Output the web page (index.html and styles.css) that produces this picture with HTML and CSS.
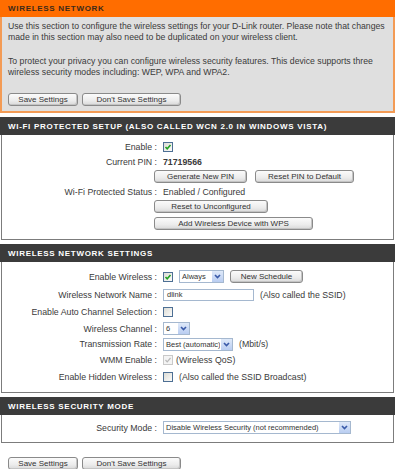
FILE: index.html
```html
<!DOCTYPE html>
<html>
<head>
	<title>Wireless Network</title>
	<link rel="stylesheet" href="styles.css">
</head>
<body>
	<div class="box intro">
		<h2>WIRELESS NETWORK</h2>
		<div class="inner">
			<p>Use this section to configure the wireless settings for your D-Link router. Please note that changes made in this section may also need to be duplicated on your wireless client.</p>
			<p>To protect your privacy you can configure wireless security features. This device supports three wireless security modes including: WEP, WPA and WPA2.</p>
			<div class="btnrow">
				<span class="btn w70">Save Settings</span><span class="btn w99">Don't Save Settings</span>
			</div>
		</div>
	</div>

	<div class="box">
		<h2>WI-FI PROTECTED SETUP (ALSO CALLED WCN 2.0 IN WINDOWS VISTA)</h2>
		<div class="inner wps">
			<div class="duple"><label>Enable :</label><span class="value"><span class="chk on"><svg width="8" height="8" viewBox="0 0 8 8"><polyline points="1.5,4 3.2,5.8 6.5,2" fill="none" stroke="#21a121" stroke-width="1.6"/></svg></span></span></div>
			<div class="duple"><label>Current PIN :</label><span class="value"><b>71719566</b></span></div>
			<div class="duple"><label></label><span class="value btns"><span class="btn w94">Generate New PIN</span><span class="btn w99">Reset PIN to Default</span></span></div>
			<div class="duple"><label>Wi-Fi Protected Status :</label><span class="value">Enabled / Configured</span></div>
			<div class="duple"><label></label><span class="value btns"><span class="btn w114">Reset to Unconfigured</span></span></div>
			<div class="duple last"><label></label><span class="value btns"><span class="btn w159">Add Wireless Device with WPS</span></span></div>
		</div>
	</div>

	<div class="box">
		<h2>WIRELESS NETWORK SETTINGS</h2>
		<div class="inner net">
			<div class="duple r19"><label>Enable Wireless :</label><span class="value">
				<span class="chk on"><svg width="8" height="8" viewBox="0 0 8 8"><polyline points="1.5,4 3.2,5.8 6.5,2" fill="none" stroke="#21a121" stroke-width="1.6"/></svg></span>
				<span class="sel w45"><span class="txt">Always</span><span class="arr"><svg width="7" height="5" viewBox="0 0 7 5"><polyline points="1,1 3.5,3.6 6,1" fill="none" stroke="#3a5aa8" stroke-width="1.6"/></svg></span></span>
				<span class="btn w73">New Schedule</span>
			</span></div>
			<div class="duple"><label>Wireless Network Name :</label><span class="value"><span class="txtbox">dlink</span><span class="note">(Also called the SSID)</span></span></div>
			<div class="duple"><label>Enable Auto Channel Selection :</label><span class="value"><span class="chk"></span></span></div>
			<div class="duple"><label>Wireless Channel :</label><span class="value">
				<span class="sel w27"><span class="txt">6</span><span class="arr"><svg width="7" height="5" viewBox="0 0 7 5"><polyline points="1,1 3.5,3.6 6,1" fill="none" stroke="#3a5aa8" stroke-width="1.6"/></svg></span></span>
			</span></div>
			<div class="duple r14"><label>Transmission Rate :</label><span class="value">
				<span class="sel w70"><span class="txt">Best (automatic)</span><span class="arr"><svg width="7" height="5" viewBox="0 0 7 5"><polyline points="1,1 3.5,3.6 6,1" fill="none" stroke="#3a5aa8" stroke-width="1.6"/></svg></span></span><span class="note">(Mbit/s)</span>
			</span></div>
			<div class="duple"><label>WMM Enable :</label><span class="value"><span class="chk off"><svg width="8" height="8" viewBox="0 0 8 8"><polyline points="1.5,4 3.2,5.8 6.5,2" fill="none" stroke="#b8b8b8" stroke-width="1.2"/></svg></span><span class="note tight">(Wireless QoS)</span></span></div>
			<div class="duple"><label>Enable Hidden Wireless :</label><span class="value"><span class="chk"></span><span class="note">(Also called the SSID Broadcast)</span></span></div>
		</div>
	</div>

	<div class="box">
		<h2>WIRELESS SECURITY MODE</h2>
		<div class="inner sec">
			<div class="duple"><label>Security Mode :</label><span class="value">
				<span class="sel w188"><span class="txt">Disable Wireless Security (not recommended)</span><span class="arr"><svg width="7" height="5" viewBox="0 0 7 5"><polyline points="1,1 3.5,3.6 6,1" fill="none" stroke="#3a5aa8" stroke-width="1.6"/></svg></span></span>
			</span></div>
		</div>
	</div>

	<div class="btnrow bottom">
		<span class="btn w70">Save Settings</span><span class="btn w99">Don't Save Settings</span>
	</div>
</body>
</html>
```

FILE: styles.css
```css
body {
	margin: 0;
	width: 395px;
	font-family: "Liberation Sans", Arial, sans-serif;
	font-size: 8.75px;
	color: #3a3a3a;
	background: #fff;
}
.box {
	margin-bottom: 4px;
}
h2 {
	margin: 0;
	height: 18px;
	line-height: 19px;
	padding-left: 8px;
	background: #3b3b3b;
	color: #fff;
	font-size: 8px;
	font-weight: bold;
	letter-spacing: 0.7px;
}
.inner {
	border: 1px solid #7c7c7c;
	border-top: none;
	margin: 0 1px;
}
.intro h2 {
	height: 17px;
	line-height: 17px;
	background: #ff6d00;
	color: #3d2a1a;
}
.intro .inner {
	margin: 0;
	border: 2px solid #f39b55;
	border-top: none;
	background: #dfdfdf;
	padding: 4px 1px 5px 6px;
}
.intro p {
	margin: 0 0 13px;
	line-height: 11px;
	font-size: 8.7px;
}
.btnrow {
	display: flex;
	gap: 4px;
}
.bottom {
	padding: 10px 0 0 8px;
}
.intro .btnrow {
	padding-top: 2px;
}

/* label / value rows */
.duple {
	display: flex;
	align-items: center;
	height: 15px;
}
.duple label {
	width: 155px;
	text-align: right;
	flex: none;
}
.value {
	display: flex;
	align-items: center;
	gap: 6px;
	margin-left: 6px;
}
.value.btns {
	margin-left: -3px;
	gap: 8px;
}
.wps {
	padding: 4px 0 8px;
}
.wps .last {
	margin-top: 2px;
}
.net {
	padding: 5px 0 7px;
}
.net .duple {
	height: 17px;
}
.net .r19 {
	height: 19px;
}
.net .r14 {
	height: 14px;
}
.sec {
	padding: 5px 0 7px;
}

.btn {
	display: inline-block;
	box-sizing: border-box;
	height: 13px;
	line-height: 11px;
	text-align: center;
	border: 1px solid #8a8a8a;
	border-radius: 3px;
	background: linear-gradient(#fbfbfb, #ececec 60%, #d9d9d9);
	box-shadow: inset -1px -1px 0 #c4c4c4;
	color: #333;
	font-size: 8px;
}
.w70 { width: 70px; }
.w73 { width: 73px; }
.w94 { width: 93px; }
.w99 { width: 99px; }
.w114 { width: 114px; }
.w159 { width: 159px; }

.chk {
	display: inline-flex;
	align-items: center;
	justify-content: center;
	box-sizing: border-box;
	width: 10px;
	height: 10px;
	border: 1px solid #4d6f94;
	background: linear-gradient(135deg, #dcdcd6, #fbfbf9);
}
.chk.off {
	border-color: #c9c9c9;
	background: #f4f4f4;
}

.sel {
	display: inline-flex;
	align-items: center;
	box-sizing: border-box;
	height: 13px;
	border: 1px solid #a5b8cf;
	background: #fff;
	font-size: 7.5px;
	color: #333;
}
.sel .txt {
	flex: 1;
	padding-left: 2px;
	white-space: nowrap;
	overflow: hidden;
}
.sel .arr {
	display: flex;
	align-items: center;
	justify-content: center;
	width: 11px;
	height: 11px;
	background: linear-gradient(#dfe9f9, #b9cdf1);
	border-left: 1px solid #fff;
}
.w27 { width: 27px; }
.w45 { width: 45px; }
.w188 { width: 188px; }
.sel.w70 { width: 70px; }

.txtbox {
	box-sizing: border-box;
	width: 91px;
	height: 12px;
	line-height: 10px;
	padding-left: 3px;
	border: 1px solid #a5b8cf;
	font-size: 7.5px;
	color: #333;
}
.value .tight {
	margin-left: -3px;
}
```
